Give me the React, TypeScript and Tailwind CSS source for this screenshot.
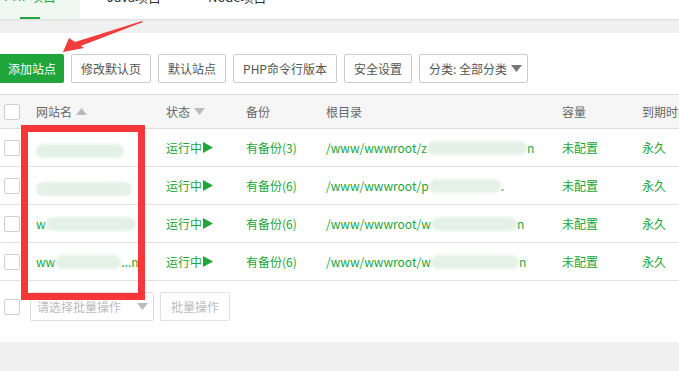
import React from 'react';

const GREEN = 'text-[#20a53a]';

function Check() {
  return <span className="block w-[16px] h-[16px] border border-[#cfcfcf] rounded-[2px] bg-white" />;
}

function Caret({ up, color = '#aaa' }: { up?: boolean; color?: string }) {
  return (
    <svg width="11" height="7" viewBox="0 0 11 7" className="inline-block ml-[4px]">
      {up ? <polygon points="0,7 5.5,0 11,7" fill={color} /> : <polygon points="0,0 5.5,7 11,0" fill={color} />}
    </svg>
  );
}

// blurred domain smudge
function Smudge({ pre, post, w }: { pre: string; post: string; w: number }) {
  return (
    <span className="relative inline-flex items-center">
      <span className={GREEN}>{pre}</span>
      <span className="relative inline-block h-[14px]" style={{ width: w }}>
        <span className="absolute inset-0 rounded-full bg-[#e4f1e7] blur-[1.5px]" />
      </span>
      <span className={GREEN}>{post}</span>
    </span>
  );
}

const rows = [
  { name: ['', '', 88], bak: 3, dir: ['z', 'n', 100] },
  { name: ['', '', 96], bak: 6, dir: ['p', '.', 72] },
  { name: ['w', '', 90], bak: 6, dir: ['w', 'n', 86] },
  { name: ['ww', '...n', 66], bak: 6, dir: ['w', 'n', 88] },
] as const;

const cols = 'grid grid-cols-[36px_130px_80px_80px_236px_80px_80px] items-center';

export default function App() {
  return (
    <div className="relative w-[679px] h-[371px] overflow-hidden bg-[#f0f0f0] text-[12px] text-[#555] font-['Noto_Sans_CJK_SC','Liberation_Sans',sans-serif]">
      {/* tabs */}
      <div className="h-[19px] bg-white overflow-hidden shadow-[0_1px_2px_rgba(0,0,0,0.08)]">
        <div className="flex h-[44px] -mt-[25px] text-[13px]">
          <div className="w-[80px] bg-[#eff8f1] flex flex-col">
            <div className="flex-1 flex items-center pl-[4px] text-[#20a53a]">PHP项目</div>
            <div className="ml-[20px] w-[20px] h-[2px] bg-[#20a53a]" />
          </div>
          <div className="w-[128px] flex items-center pl-[27px] text-[#333]">Java项目</div>
          <div className="flex items-center text-[#333]">Node项目</div>
        </div>
      </div>

      <div className="h-[14px]" />

      {/* panel */}
      <div className="bg-white h-[309px]">
        <div className="flex gap-[7px] pt-[21px] pb-[11px]">
          <button className="h-[29px] w-[64px] bg-[#20a53a] text-white rounded-r-[2px] text-[12px]">添加站点</button>
          {['修改默认页', '默认站点', 'PHP命令行版本', '安全设置'].map((t) => (
            <button key={t} className="h-[29px] px-[9px] border border-[#cccccc] rounded-[2px] bg-white text-[#555]">
              {t}
            </button>
          ))}
          <button className="h-[29px] pl-[9px] pr-[5px] border border-[#cccccc] rounded-[2px] bg-white text-[#555] flex items-center">
            分类: 全部分类<Caret color="#777" />
          </button>
        </div>

        <div className="w-[760px] border-t border-[#dddddd]">
          <div className={`${cols} h-[34px] bg-[#f6f6f6] border-b border-[#dddddd] text-[#666]`}>
            <div className="pl-[4px]"><Check /></div>
            <div className="flex items-center">网站名<Caret up color="#bbb" /></div>
            <div className="flex items-center">状态<Caret color="#bbb" /></div>
            <div>备份</div>
            <div>根目录</div>
            <div>容量</div>
            <div>到期时间</div>
          </div>
          {rows.map((r, i) => (
            <div key={i} className={`${cols} h-[38px] border-b border-[#e2e2e2]`}>
              <div className="pl-[4px]"><Check /></div>
              <div><Smudge pre={r.name[0]} post={r.name[1]} w={r.name[2]} /></div>
              <div className={`${GREEN} flex items-center`}>
                运行中
                <svg width="10" height="11" viewBox="0 0 10 11" className="ml-[1px]">
                  <polygon points="0,0 10,5.5 0,11" fill="#20a53a" />
                </svg>
              </div>
              <div className={GREEN}>有备份({r.bak})</div>
              <div><Smudge pre={'/www/wwwroot/' + r.dir[0]} post={r.dir[1]} w={r.dir[2]} /></div>
              <div className={GREEN}>未配置</div>
              <div className={GREEN}>永久</div>
            </div>
          ))}
        </div>

        <div className="flex items-center gap-[10px] pt-[11px] pl-[4px]">
          <Check />
          <div className="h-[29px] w-[124px] border border-[#dddddd] rounded-[2px] flex items-center justify-between pl-[6px] pr-[5px] text-[#bbb]">
            请选择批量操作<Caret color="#bbb" />
          </div>
          <div className="h-[29px] -ml-[4px] px-[10px] border border-[#e2e2e2] rounded-[2px] flex items-center text-[#bbb]">批量操作</div>
        </div>
      </div>

      {/* annotations */}
      <div className="absolute left-[21px] top-[125px] w-[124px] h-[175px] border-[7px] border-[#f5373a]" />
      <svg className="absolute left-0 top-0" width="160" height="60" viewBox="0 0 160 60">
        <polygon points="143,22 78,47 75,42 142,21" fill="#f23b3b" />
        <polygon points="63,52 69,38 84,48" fill="#f23b3b" />
      </svg>
    </div>
  );
}
